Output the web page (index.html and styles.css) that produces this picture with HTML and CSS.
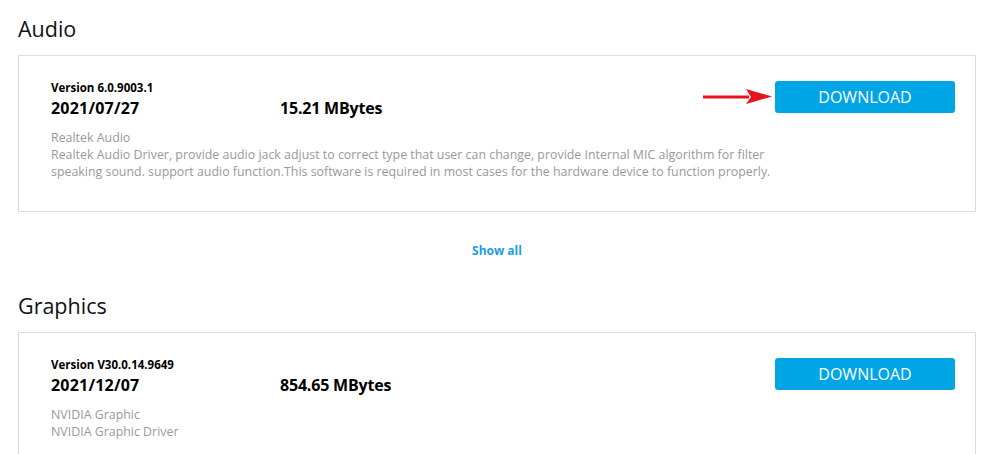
FILE: index.html
```html
<!DOCTYPE html>
<html>
<head>
  <meta charset="utf-8">
  <link rel="stylesheet" href="styles.css">
  <title>Drivers</title>
</head>
<body>
  <div class="page">
    <h2 class="group-title">Audio</h2>
    <div class="driver">
      <div class="driver-info">
        <div class="version">Version 6.0.9003.1</div>
        <div class="meta">
          <span class="date">2021/07/27</span>
          <span class="size">15.21 MBytes</span>
        </div>
        <div class="desc">
          <p>Realtek Audio</p>
          <p>Realtek Audio Driver, provide audio jack adjust to correct type that user can change, provide Internal MIC algorithm for filter speaking sound. support audio function.This software is required in most cases for the hardware device to function properly.</p>
        </div>
      </div>
      <div class="driver-action">
        <svg class="arrow" width="72" height="18" viewBox="0 0 72 18">
          <path d="M2 7.5 L48 7.5 L48 10.5 L2 10.5 Z" fill="#e8141b"/>
          <path d="M45 1 L71 8.5 L45 16 L50 9 Z" fill="#e8141b"/>
        </svg>
        <a class="btn" href="#">DOWNLOAD</a>
      </div>
    </div>
    <div class="show-all"><a href="#">Show all</a></div>

    <h2 class="group-title">Graphics</h2>
    <div class="driver">
      <div class="driver-info">
        <div class="version">Version V30.0.14.9649</div>
        <div class="meta">
          <span class="date">2021/12/07</span>
          <span class="size">854.65 MBytes</span>
        </div>
        <div class="desc">
          <p>NVIDIA Graphic</p>
          <p>NVIDIA Graphic Driver</p>
        </div>
      </div>
      <div class="driver-action">
        <a class="btn" href="#">DOWNLOAD</a>
      </div>
    </div>
  </div>
</body>
</html>
```

FILE: styles.css
```css
html, body { margin: 0; padding: 0; background: #fff; }
body {
  font-family: "Open Sans", "Noto Sans", "Liberation Sans", sans-serif;
  color: #000;
}

.page {
  padding: 14px 8px 0 18px;
}

.group-title {
  font-weight: normal;
  font-size: 21.5px;
  line-height: 30px;
  margin: 0 0 11px;
  color: #111;
}

.driver {
  display: flex;
  justify-content: space-between;
  align-items: flex-start;
  border: 1px solid #dcdcdc;
  padding: 25px 20px 31px 32px;
}

.driver-info { flex: 1; min-width: 0; }

.version {
  font-size: 11.5px;
  font-weight: bold;
  line-height: 14px;
}

.meta {
  display: flex;
  font-size: 16px;
  font-weight: bold;
  line-height: 22px;
  margin-top: 2px;
}
.meta .date { width: 229px; letter-spacing: 0.2px; }
.meta .size { letter-spacing: -0.2px; }

.desc {
  margin-top: 10px;
  color: #999;
  font-size: 12.4px;
  line-height: 17px;
}
.desc p { margin: 0; }

.driver-action {
  position: relative;
  flex-shrink: 0;
}
.arrow {
  position: absolute;
  right: 100%;
  top: 7px;
  margin-right: 2px;
}

.btn {
  display: block;
  width: 180px;
  height: 32px;
  line-height: 32px;
  text-align: center;
  background: #00a5e6;
  color: #fff;
  border-radius: 3px;
  font-size: 16px;
  text-decoration: none;
}

.show-all {
  text-align: center;
  font-size: 12px;
  font-weight: bold;
  line-height: 16px;
  padding: 31px 0 32px;
}
.show-all a { color: #1a9ee0; text-decoration: none; }
```
